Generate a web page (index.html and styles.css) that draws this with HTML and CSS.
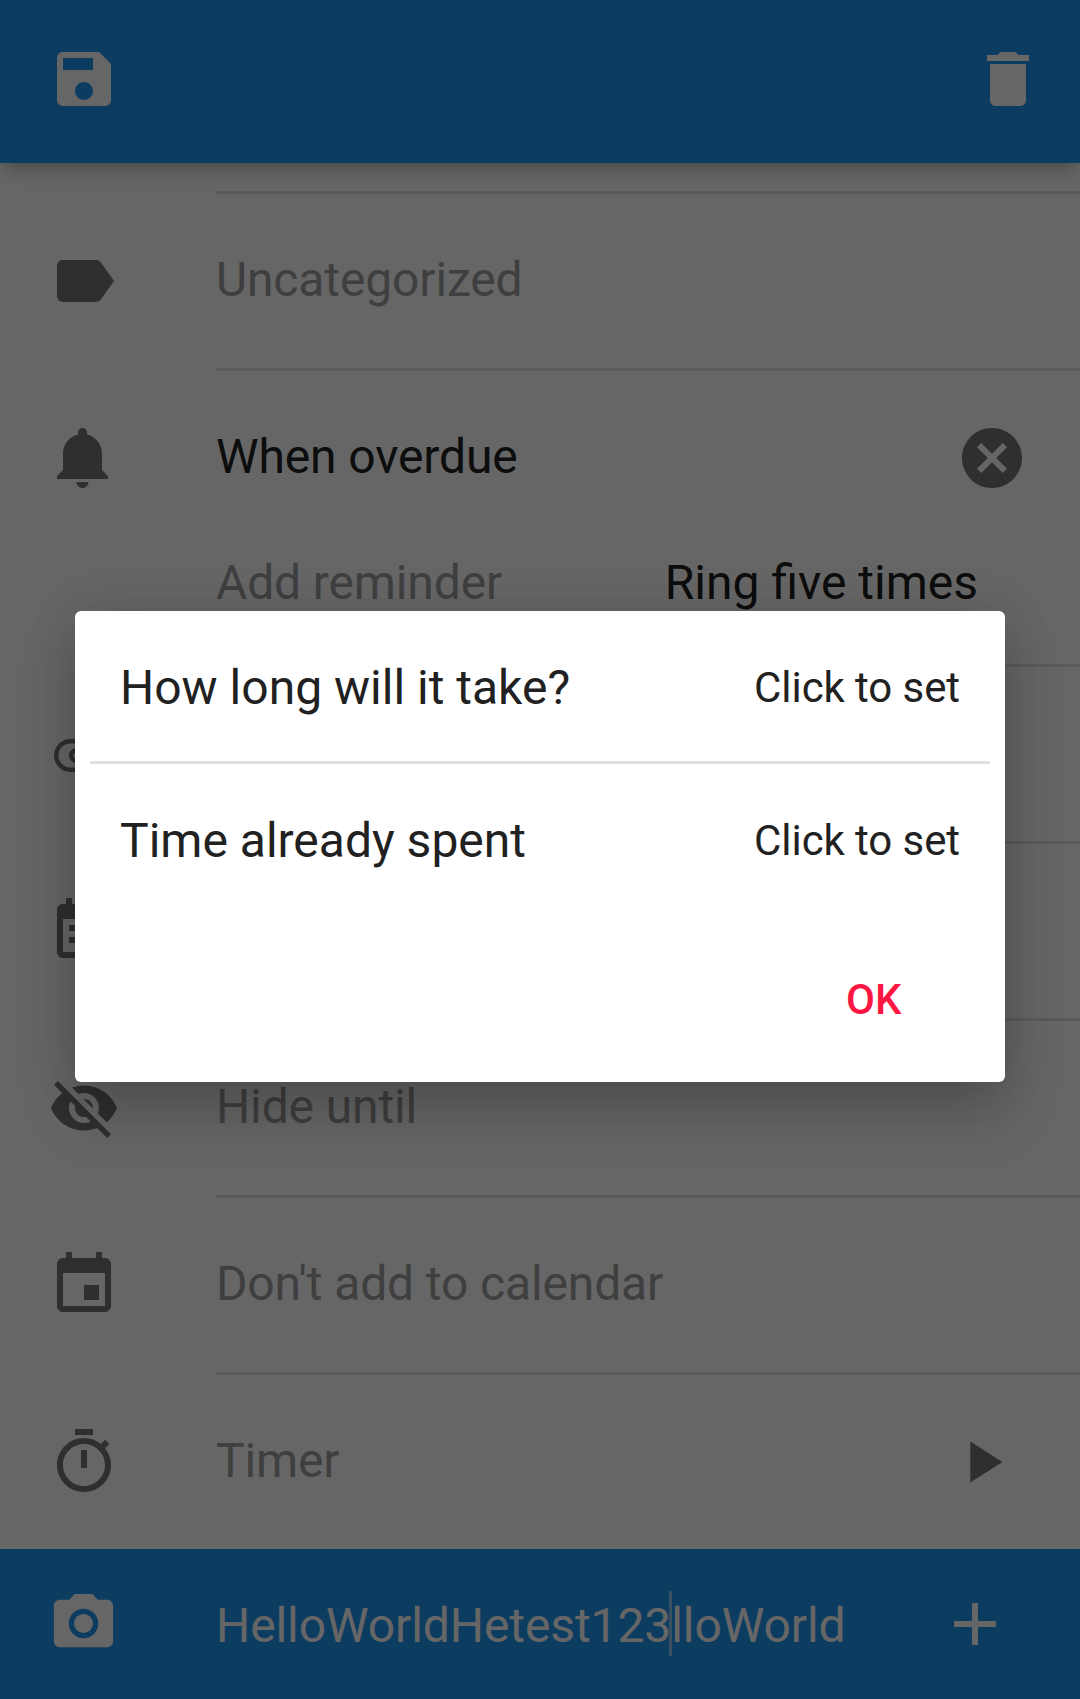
FILE: index.html
```html
<!DOCTYPE html>
<html lang="en">
<head>
<meta charset="utf-8">
<title>Edit task</title>
<link rel="stylesheet" href="styles.css">
</head>
<body>
<div class="screen">
  <header class="toolbar">
    <svg class="icon" viewBox="0 0 24 24"><path d="M17 3H5c-1.11 0-2 .9-2 2v14c0 1.1.89 2 2 2h14c1.1 0 2-.9 2-2V7l-4-4zm-5 16c-1.66 0-3-1.34-3-3s1.34-3 3-3 3 1.34 3 3-1.34 3-3 3zm3-10H5V5h10v4z"/></svg>
    <svg class="icon" viewBox="0 0 24 24"><path d="M6 19c0 1.1.9 2 2 2h8c1.1 0 2-.9 2-2V7H6v12zM19 4h-3.5l-1-1h-5l-1 1H5v2h14V4z"/></svg>
  </header>

  <main class="list">
    <section class="row">
      <svg class="icon" viewBox="0 0 24 24"><path d="M17.63 5.84C17.27 5.33 16.67 5 16 5L5 5.01C3.9 5.01 3 5.9 3 7v10c0 1.1.9 1.99 2 1.99L16 19c.67 0 1.27-.33 1.63-.84L22 12l-4.37-6.16z"/></svg>
      <div class="field"><span class="label hint">Uncategorized</span></div>
    </section>
    <section class="row reminders">
      <svg class="icon" viewBox="0 0 24 24"><path d="M11.5 22c1.1 0 2-.9 2-2h-4c0 1.1.9 2 2 2zm6.5-6v-5.5c0-3.07-2.13-5.64-5-6.32V3.5c0-.83-.67-1.5-1.5-1.5S10 2.67 10 3.5v.68c-2.87.68-5 3.25-5 6.32V16l-2 2v1h17v-1l-2-2z"/></svg>
      <div class="field">
        <div class="line">
          <span class="label">When overdue</span>
          <svg class="icon clear" viewBox="0 0 24 24"><path d="M12 2C6.47 2 2 6.47 2 12s4.47 10 10 10 10-4.47 10-10S17.53 2 12 2zm5 13.59L15.59 17 12 13.41 8.41 17 7 15.59 10.59 12 7 8.41 8.41 7 12 10.59 15.59 7 17 8.41 13.41 12 17 15.59z"/></svg>
        </div>
        <div class="line add">
          <span class="label hint">Add reminder</span>
          <span class="label ring">Ring five times</span>
        </div>
      </div>
    </section>
    <section class="row">
      <svg class="icon" viewBox="0 0 24 24"><path d="M7.5 18C4.46 18 2 15.54 2 12.5S4.46 7 7.5 7H18c2.21 0 4 1.79 4 4s-1.79 4-4 4H9.5C8.12 15 7 13.88 7 12.5S8.12 10 9.5 10H17v1.5H9.5c-.55 0-1 .45-1 1s.45 1 1 1H18c1.38 0 2.5-1.12 2.5-2.5S19.38 8.5 18 8.5H7.5c-2.21 0-4 1.79-4 4s1.79 4 4 4H17V18H7.5z"/></svg>
      <div class="field"></div>
    </section>
    <section class="row">
      <svg class="icon" viewBox="0 0 24 24"><path d="M17 10H7v2h10v-2zm2-7h-1V1h-2v2H8V1H6v2H5c-1.11 0-1.99.9-1.99 2L3 19c0 1.1.89 2 2 2h14c1.1 0 2-.9 2-2V5c0-1.1-.9-2-2-2zm0 16H5V8h14v11zm-5-5H7v2h7v-2z"/></svg>
      <div class="field"></div>
    </section>
    <section class="row">
      <svg class="icon" viewBox="0 0 24 24"><path d="M12 7c2.76 0 5 2.24 5 5 0 .65-.13 1.26-.36 1.83l2.92 2.92c1.51-1.26 2.7-2.89 3.43-4.75-1.73-4.39-6-7.5-11-7.5-1.4 0-2.74.25-3.98.7l2.16 2.16C10.74 7.13 11.35 7 12 7zM2 4.27l2.28 2.28.46.46C3.08 8.3 1.78 10.02 1 12c1.73 4.39 6 7.5 11 7.5 1.55 0 3.03-.3 4.38-.84l.42.42L19.73 22 21 20.73 3.27 3 2 4.27zM7.53 9.8l1.55 1.55c-.05.21-.08.43-.08.65 0 1.66 1.34 3 3 3 .22 0 .44-.03.65-.08l1.55 1.55c-.67.33-1.41.53-2.2.53-2.76 0-5-2.24-5-5 0-.79.2-1.53.53-2.2zm4.31-.78l3.15 3.15.02-.16c0-1.66-1.34-3-3-3l-.17.01z"/></svg>
      <div class="field"><span class="label hint">Hide until</span></div>
    </section>
    <section class="row">
      <svg class="icon" viewBox="0 0 24 24"><path d="M17 12h-5v5h5v-5zM16 1v2H8V1H6v2H5c-1.11 0-1.99.9-1.99 2L3 19c0 1.1.89 2 2 2h14c1.1 0 2-.9 2-2V5c0-1.1-.9-2-2-2h-1V1h-2zm3 18H5V8h14v11z"/></svg>
      <div class="field"><span class="label hint">Don't add to calendar</span></div>
    </section>
    <section class="row">
      <svg class="icon" viewBox="0 0 24 24"><path d="M15 1H9v2h6V1zm-4 13h2V8h-2v6zm8.030-6.610l1.420-1.420c-.43-.51-.9-.99-1.410-1.410l-1.420 1.420C16.070 4.740 14.120 4 12 4c-4.970 0-9 4.030-9 9s4.020 9 9 9 9-4.030 9-9c0-2.120-.74-4.070-1.970-5.610zM12 20c-3.870 0-7-3.130-7-7s3.130-7 7-7 7 3.130 7 7-3.130 7-7 7z"/></svg>
      <div class="field line">
        <span class="label hint">Timer</span>
        <svg class="icon play" viewBox="0 0 24 24"><path d="M8 5v14l11-7z"/></svg>
      </div>
    </section>
  </main>

  <footer class="comment">
    <svg class="icon camera" viewBox="0 0 24 24"><circle cx="12" cy="12" r="3.2"/><path d="M9 2L7.170 4H4c-1.100 0-2 .9-2 2v12c0 1.100.9 2 2 2h16c1.100 0 2-.9 2-2V6c0-1.100-.9-2-2-2h-3.170L15 2H9zm3 15c-2.760 0-5-2.240-5-5s2.240-5 5-5 5 2.240 5 5-2.240 5-5 5z"/></svg>
    <div class="input">HelloWorldHetest123<span class="caret"></span>lloWorld</div>
    <svg class="icon" viewBox="0 0 24 24"><path d="M19 13h-6v6h-2v-6H5v-2h6V5h2v6h6v2z"/></svg>
  </footer>

  <div class="scrim">
    <div class="dialog" role="dialog">
      <div class="setting"><span class="question">How long will it take?</span><span class="value">Click to set</span></div>
      <div class="divider"></div>
      <div class="setting"><span class="question">Time already spent</span><span class="value">Click to set</span></div>
      <div class="actions"><span class="ok">OK</span></div>
    </div>
  </div>
</div>
</body>
</html>
```
FILE: styles.css
```css
* { box-sizing: border-box; }
body { margin: 0; font-family: Roboto, sans-serif; font-size: 48px; background: #fff; }
.screen {
  position: relative;
  width: 1080px;
  height: 1699px;
  overflow: hidden;
  display: flex;
  flex-direction: column;
}
.icon { flex: none; width: 72px; height: 72px; display: block; fill: currentColor; }

.toolbar {
  position: relative;
  height: 163px;
  padding: 0 36px 5px 48px;
  display: flex;
  align-items: center;
  justify-content: space-between;
  background: #2196f3;
  color: #fff;
  box-shadow: 0 12px 18px -4px rgba(0, 0, 0, .22), 0 0 12px rgba(0, 0, 0, .08);
}

.list { flex: 1; padding-top: 28px; color: #757575; }
.row { display: flex; height: 177px; padding-left: 48px; }
.row > .icon { margin: 54px 96px 0 0; }
.field { flex: 1; border-top: 3px solid #e0e0e0; height: 177px; display: flex; align-items: center; }
.reminders, .reminders .field { height: 296px; }
.reminders .field { display: block; }
.line { display: flex; align-items: center; justify-content: space-between; }
.reminders .line { height: 174px; }
.reminders .add { height: 78px; }
.label { color: #212121; line-height: 56px; padding-bottom: 2px; white-space: nowrap; letter-spacing: -.13px; }
.hint { color: #9e9e9e; }
.clear { margin-right: 52px; }
.ring { margin-right: 102px; letter-spacing: normal; }
.play { width: 70px; height: 70px; margin-right: 63px; }

.comment {
  height: 150px;
  padding: 0 69px 0 48px;
  display: flex;
  align-items: center;
  background: #2196f3;
  color: #fff;
}
.camera { width: 71px; height: 71px; margin: 0 97px 1px 0; }
.input { flex: 1; line-height: 56px; padding-top: 4px; white-space: nowrap; letter-spacing: -.09px; }
.caret { position: relative; }
.caret::before {
  content: "";
  position: absolute;
  left: -2px;
  top: -6px;
  width: 3px;
  height: 65px;
  background: #91c5f0;
}

.scrim {
  position: absolute;
  inset: 0;
  padding-top: 611px;
  background: rgba(0, 0, 0, .6);
}
.dialog {
  width: 930px;
  height: 471px;
  margin: 0 auto;
  border-radius: 6px;
  background: #fff;
  color: #212121;
  box-shadow: 0 32px 60px rgba(0, 0, 0, .2), 0 0 50px rgba(0, 0, 0, .1);
}
.setting {
  height: 150px;
  padding: 2px 45px 0;
  display: flex;
  align-items: center;
  justify-content: space-between;
}
.value { font-size: 42px; letter-spacing: -.08px; }
.divider { height: 3px; margin: 0 15px; background: #e0e0e0; }
.actions { padding: 60px 103.5px 0; text-align: right; line-height: 48px; }
.ok { font-size: 42px; font-weight: 500; color: #ff1744; }
```
